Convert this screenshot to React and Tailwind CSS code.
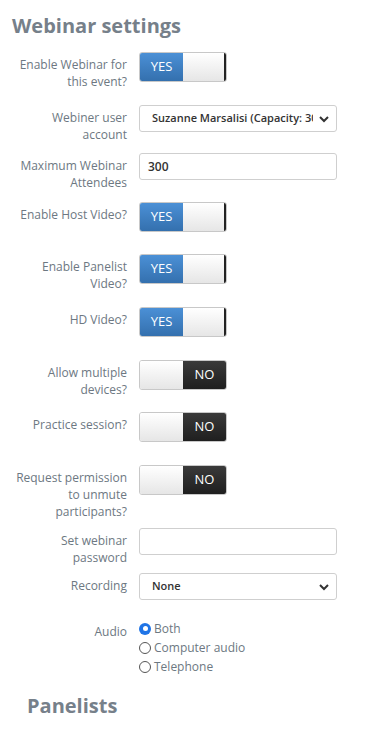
import React from 'react';

const font = { fontFamily: '"Open Sans", "Liberation Sans", sans-serif' };

function Toggle({ on }) {
    if (on) {
        return (
            <div className="flex w-[88px] h-[30px] rounded-[3px] border border-[#c8c8c8] overflow-hidden">
                <div className="w-[43px] h-full flex items-center justify-center text-white text-[13px] bg-gradient-to-b from-[#4b90d6] to-[#3470ae]">
                    YES
                </div>
                <div className="flex-1 h-full bg-gradient-to-b from-[#ffffff] to-[#e6e6e6] border-r-2 border-[#222]" />
            </div>
        );
    }
    return (
        <div className="flex w-[88px] h-[30px] rounded-[3px] border border-[#c8c8c8] overflow-hidden">
            <div className="w-[43px] h-full bg-gradient-to-b from-[#ffffff] to-[#e6e6e6]" />
            <div className="flex-1 h-full flex items-center justify-center text-white text-[13px] bg-gradient-to-b from-[#3a3a3a] to-[#1f1f1f]">
                NO
            </div>
        </div>
    );
}

function Select({ value }) {
    return (
        <div className="flex items-center w-[198px] h-[27px] rounded-[3px] border border-[#cfcfcf] bg-white pl-[12px] pr-[6px]">
            <span className="flex-1 overflow-hidden whitespace-nowrap text-[11px] font-semibold text-[#333]">{value}</span>
            <svg width="12" height="12" viewBox="0 0 12 12" className="ml-[5px] shrink-0">
                <path d="M2 4 L6 8 L10 4" fill="none" stroke="#333" strokeWidth="2" />
            </svg>
        </div>
    );
}

function Input({ value }) {
    return (
        <div className="flex items-center w-[198px] h-[27px] rounded-[3px] border border-[#cfcfcf] bg-white pl-[8px] text-[12px] font-semibold text-[#333]">
            {value}
        </div>
    );
}

function Row({ h, label, children }) {
    return (
        <div className="flex items-start" style={{ height: h }}>
            <div className="w-[127px] shrink-0 pt-[4px] text-right text-[12px] leading-[17px] text-[#6d7882] whitespace-nowrap">
                {label}
            </div>
            <div className="ml-[12px]">{children}</div>
        </div>
    );
}

function Radio({ checked, label }) {
    return (
        <div className="flex items-center h-[19px] text-[12px] text-[#6d7882]">
            {checked ? (
                <span className="w-[12px] h-[12px] rounded-full bg-[#1f74e6] flex items-center justify-center mr-[3px]">
                    <span className="w-[5px] h-[5px] rounded-full bg-white" />
                </span>
            ) : (
                <span className="w-[12px] h-[12px] rounded-full border border-[#555] bg-white mr-[3px]" />
            )}
            {label}
        </div>
    );
}

export default function App() {
    return (
        <div className="w-[379px] min-h-[730px] bg-white" style={font}>
            <h1 className="pt-[12px] pl-[12px] text-[20px] leading-[28px] font-bold text-[#76808a]">Webinar settings</h1>
            <div className="mt-[12px]">
                <Row h={53} label={<>Enable Webinar for<br />this event?</>}><Toggle on /></Row>
                <Row h={48} label={<>Webiner user<br />account</>}><Select value="Suzanne Marsalisi (Capacity: 300)" /></Row>
                <Row h={49} label={<>Maximum Webinar<br />Attendees</>}><Input value="300" /></Row>
                <Row h={52} label="Enable Host Video?"><Toggle on /></Row>
                <Row h={53} label={<>Enable Panelist<br />Video?</>}><Toggle on /></Row>
                <Row h={53} label="HD Video?"><Toggle on /></Row>
                <Row h={52} label={<>Allow multiple<br />devices?</>}><Toggle /></Row>
                <Row h={53} label="Practice session?"><Toggle /></Row>
                <Row h={63} label={<>Request permission<br />to unmute<br />participants?</>}><Toggle /></Row>
                <Row h={45} label={<>Set webinar<br />password</>}><Input value="" /></Row>
                <Row h={46} label="Recording"><Select value="None" /></Row>
                <Row h={57} label="Audio">
                    <div>
                        <Radio checked label="Both" />
                        <Radio label="Computer audio" />
                        <Radio label="Telephone" />
                    </div>
                </Row>
            </div>
            <h2 className="mt-[16px] pl-[27px] text-[20px] leading-[28px] font-bold text-[#76808a]">Panelists</h2>
        </div>
    );
}
